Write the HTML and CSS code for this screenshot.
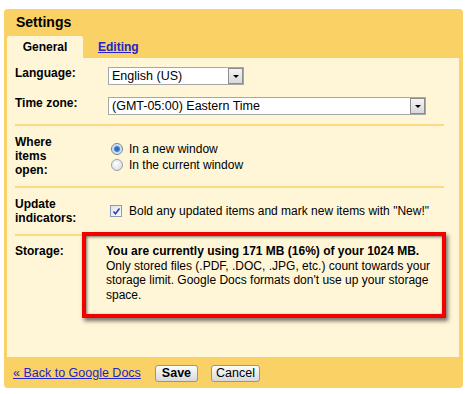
FILE: index.html
```html
<!DOCTYPE html>
<html lang="en">
<head>
    <meta charset="UTF-8">
    <title>Settings</title>
    <link rel="stylesheet" href="styles.css">
</head>
<body>
    <div class="panel">
        <div class="title">Settings</div>
        <div class="tabs">
            <div class="tab active">General</div>
            <a class="tab" href="#">Editing</a>
        </div>
        <div class="content">
            <div class="section">
                <div class="field">
                    <div class="label">Language:</div>
                    <div class="select select-lang">
                        <span class="select-value">English (US)</span>
                        <span class="select-arrow"></span>
                    </div>
                </div>
                <div class="field">
                    <div class="label">Time zone:</div>
                    <div class="select select-zone">
                        <span class="select-value">(GMT-05:00) Eastern Time</span>
                        <span class="select-arrow"></span>
                    </div>
                </div>
            </div>
            <div class="section">
                <div class="field">
                    <div class="label">Where<br>items<br>open:</div>
                    <div class="options">
                        <div class="option"><span class="radio checked"></span>In a new window</div>
                        <div class="option"><span class="radio"></span>In the current window</div>
                    </div>
                </div>
            </div>
            <div class="section">
                <div class="field">
                    <div class="label">Update<br>indicators:</div>
                    <div class="options">
                        <div class="option">
                            <span class="checkbox">
                                <svg width="9" height="9" viewBox="0 0 9 9"><path d="M1.5 4.5 L3.5 6.8 L7.5 1.5" fill="none" stroke="#2c44a8" stroke-width="1.6"/></svg>
                            </span>Bold any updated items and mark new items with "New!"
                        </div>
                    </div>
                </div>
            </div>
            <div class="section last">
                <div class="field">
                    <div class="label">Storage:</div>
                    <div class="storage">
                        <b>You are currently using 171 MB (16%) of your 1024 MB.</b><br>
                        Only stored files (.PDF, .DOC, .JPG, etc.) count towards your<br>
                        storage limit. Google Docs formats don't use up your storage<br>
                        space.
                    </div>
                </div>
                <div class="highlight"></div>
            </div>
        </div>
        <div class="footer">
            <a href="#">&laquo; Back to Google Docs</a>
            <button class="btn btn-save">Save</button>
            <button class="btn">Cancel</button>
        </div>
    </div>
</body>
</html>
```

FILE: styles.css
```css
body {
    margin: 0;
    background: #fff;
    font-family: 'Liberation Sans', Arial, sans-serif;
    font-size: 12px;
    color: #000;
}

a {
    color: #2424c8;
}

.panel {
    width: 459px;
    margin: 9px 0 0 4px;
    padding: 0 4px 0 3px;
    box-sizing: border-box;
    background: #fad165;
    border-radius: 4px;
}

.title {
    height: 27px;
    box-sizing: border-box;
    padding: 5px 0 0 9px;
    font-size: 14px;
    line-height: 16px;
    font-weight: bold;
}

.tabs {
    display: flex;
    height: 22px;
}

.tab {
    padding: 1px 15px 0;
    line-height: 21px;
    font-weight: bold;
    font-size: 12px;
}

.tab.active {
    width: 76px;
    box-sizing: border-box;
    text-align: center;
    background: #fff6d8;
    border-radius: 2px 2px 0 0;
}

a.tab {
    padding-left: 15px;
}

.content {
    position: relative;
    height: 299px;
    box-sizing: border-box;
    padding: 8px 15px 0 8px;
    background: #fff6d8;
}

.section {
    padding: 9px 0 9px;
    border-bottom: 2px solid #fcd985;
}

.section:first-child {
    padding-top: 0;
}

.section.last {
    padding-top: 8px;
    border-bottom: none;
}

.field {
    display: grid;
    grid-template-columns: 93px 1fr;
    align-items: start;
}

.field + .field {
    margin-top: 11px;
}

.label {
    font-weight: bold;
    line-height: 14px;
}

/* fake select boxes */
.select {
    display: flex;
    height: 18px;
    margin-top: 1px;
    box-sizing: border-box;
    border: 1px solid #a7a7a7;
    background: #fff;
}

.select-lang {
    width: 136px;
}

.select-zone {
    width: 318px;
}

.select-value {
    flex: 1;
    padding: 1px 0 0 3px;
    line-height: 14px;
    font-size: 12.5px;
    white-space: nowrap;
    overflow: hidden;
}

.select-arrow {
    position: relative;
    width: 13px;
    border: 1px solid #8d8d8d;
    background: linear-gradient(#f4f4f4, #d9d9d9);
}

.select-arrow::after {
    content: '';
    position: absolute;
    left: 4px;
    top: 6px;
    border-left: 3px solid transparent;
    border-right: 3px solid transparent;
    border-top: 3px solid #000;
}

.options {
    margin-top: 6px;
}

.option {
    display: flex;
    align-items: center;
    line-height: 16px;
    white-space: nowrap;
}

.radio {
    width: 12px;
    height: 12px;
    margin: 0 6px 0 3px;
    box-sizing: border-box;
    border: 1px solid #9aa2aa;
    border-radius: 50%;
    background: radial-gradient(circle at 40% 35%, #fff, #d6d6d6);
}

.radio.checked {
    border-color: #6f8396;
    background: radial-gradient(circle, #1d5fa8 0, #3b86d0 2.5px, #c8d8e6 3.5px, #eef3f7 5.5px);
}

.checkbox {
    display: flex;
    align-items: center;
    justify-content: center;
    width: 12px;
    height: 12px;
    margin: 0 7px 0 2px;
    box-sizing: border-box;
    border: 1px solid #8a9cb8;
    background: linear-gradient(135deg, #dfe3ee, #fbfbfd);
}

.storage {
    margin-left: -2px;
    line-height: 14.5px;
    white-space: nowrap;
}

.highlight {
    position: absolute;
    left: 75px;
    top: 174px;
    width: 364px;
    height: 86px;
    box-sizing: border-box;
    border: 4px solid #f20000;
    box-shadow: 2px 3px 4px rgba(0, 0, 0, 0.55), inset 1px 1px 3px rgba(0, 0, 0, 0.55);
}

.footer {
    display: flex;
    align-items: center;
    height: 31px;
    padding: 1px 0 0 6px;
    box-sizing: border-box;
}

.footer a {
    margin-right: 14px;
    font-size: 12.5px;
}

.btn {
    height: 17px;
    margin-right: 13px;
    padding: 0 4px;
    border: 1px solid #959595;
    border-radius: 3px;
    background: linear-gradient(#fdfdfd, #d8d8d8);
    font-family: 'Liberation Sans', Arial, sans-serif;
    font-size: 12.5px;
    line-height: 14px;
    color: #000;
}

.btn-save {
    font-weight: bold;
    padding: 0 6px;
}
```
